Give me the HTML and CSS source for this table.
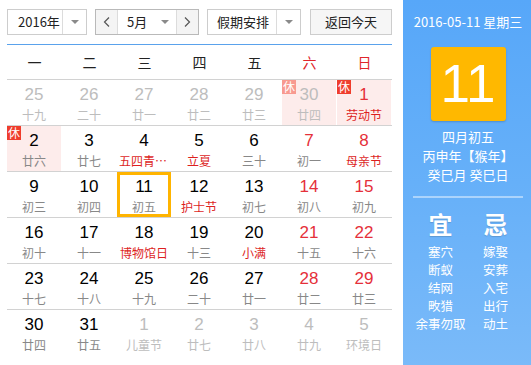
FILE: index.html
```html
<!DOCTYPE html>
<html lang="zh-CN">
<head>
<meta charset="utf-8">
<title>万年历</title>
<link rel="stylesheet" href="styles.css">
</head>
<body>
<div class="app">
  <div class="main">
    <div class="toolbar">
      <div class="select year">
        <span class="sel-text">2016年</span>
        <span class="sel-arrow"><i class="tri"></i></span>
      </div>
      <div class="month-group">
        <span class="nav prev"><svg width="7" height="10" viewBox="0 0 7 10"><polyline points="6,0.5 1.5,5 6,9.5" fill="none" stroke="#555" stroke-width="1.2"/></svg></span>
        <span class="month-text">5月<i class="tri"></i></span>
        <span class="nav next"><svg width="7" height="10" viewBox="0 0 7 10"><polyline points="1,0.5 5.5,5 1,9.5" fill="none" stroke="#555" stroke-width="1.2"/></svg></span>
      </div>
      <div class="select holiday">
        <span class="sel-text">假期安排</span>
        <span class="sel-arrow"><i class="tri"></i></span>
      </div>
      <button class="today-btn">返回今天</button>
    </div>

    <div class="calendar">
      <div class="week-head">
        <span>一</span><span>二</span><span>三</span><span>四</span><span>五</span><span class="we">六</span><span class="we">日</span>
      </div>

      <div class="week">
        <div class="day other"><span class="num">25</span><span class="lunar">十九</span></div>
        <div class="day other"><span class="num">26</span><span class="lunar">二十</span></div>
        <div class="day other"><span class="num">27</span><span class="lunar">廿一</span></div>
        <div class="day other"><span class="num">28</span><span class="lunar">廿二</span></div>
        <div class="day other"><span class="num">29</span><span class="lunar">廿三</span></div>
        <div class="day other rest"><span class="badge faded">休</span><span class="num">30</span><span class="lunar">廿四</span></div>
        <div class="day weekend rest"><span class="badge">休</span><span class="num">1</span><span class="lunar fest">劳动节</span></div>
      </div>

      <div class="week">
        <div class="day rest"><span class="badge">休</span><span class="num">2</span><span class="lunar">廿六</span></div>
        <div class="day"><span class="num">3</span><span class="lunar">廿七</span></div>
        <div class="day"><span class="num">4</span><span class="lunar fest">五四青年节</span></div>
        <div class="day"><span class="num">5</span><span class="lunar fest">立夏</span></div>
        <div class="day"><span class="num">6</span><span class="lunar">三十</span></div>
        <div class="day weekend"><span class="num">7</span><span class="lunar">初一</span></div>
        <div class="day weekend"><span class="num">8</span><span class="lunar fest">母亲节</span></div>
      </div>

      <div class="week">
        <div class="day"><span class="num">9</span><span class="lunar">初三</span></div>
        <div class="day"><span class="num">10</span><span class="lunar">初四</span></div>
        <div class="day today"><span class="num">11</span><span class="lunar">初五</span></div>
        <div class="day"><span class="num">12</span><span class="lunar fest">护士节</span></div>
        <div class="day"><span class="num">13</span><span class="lunar">初七</span></div>
        <div class="day weekend"><span class="num">14</span><span class="lunar">初八</span></div>
        <div class="day weekend"><span class="num">15</span><span class="lunar">初九</span></div>
      </div>

      <div class="week">
        <div class="day"><span class="num">16</span><span class="lunar">初十</span></div>
        <div class="day"><span class="num">17</span><span class="lunar">十一</span></div>
        <div class="day"><span class="num">18</span><span class="lunar fest">博物馆日</span></div>
        <div class="day"><span class="num">19</span><span class="lunar">十三</span></div>
        <div class="day"><span class="num">20</span><span class="lunar fest">小满</span></div>
        <div class="day weekend"><span class="num">21</span><span class="lunar">十五</span></div>
        <div class="day weekend"><span class="num">22</span><span class="lunar">十六</span></div>
      </div>

      <div class="week">
        <div class="day"><span class="num">23</span><span class="lunar">十七</span></div>
        <div class="day"><span class="num">24</span><span class="lunar">十八</span></div>
        <div class="day"><span class="num">25</span><span class="lunar">十九</span></div>
        <div class="day"><span class="num">26</span><span class="lunar">二十</span></div>
        <div class="day"><span class="num">27</span><span class="lunar">廿一</span></div>
        <div class="day weekend"><span class="num">28</span><span class="lunar">廿二</span></div>
        <div class="day weekend"><span class="num">29</span><span class="lunar">廿三</span></div>
      </div>

      <div class="week last">
        <div class="day"><span class="num">30</span><span class="lunar">廿四</span></div>
        <div class="day"><span class="num">31</span><span class="lunar">廿五</span></div>
        <div class="day other"><span class="num">1</span><span class="lunar">儿童节</span></div>
        <div class="day other"><span class="num">2</span><span class="lunar">廿七</span></div>
        <div class="day other"><span class="num">3</span><span class="lunar">廿八</span></div>
        <div class="day other"><span class="num">4</span><span class="lunar">廿九</span></div>
        <div class="day other"><span class="num">5</span><span class="lunar">环境日</span></div>
      </div>
    </div>
  </div>

  <aside class="panel">
    <div class="p-date">2016-05-11 星期三</div>
    <div class="p-big">11</div>
    <div class="p-lunar">
      <div>四月初五</div>
      <div>丙申年【猴年】</div>
      <div>癸巳月 癸巳日</div>
    </div>
    <div class="p-sep"></div>
    <div class="p-yiji">
      <div class="yj-col">
        <div class="yj-head">宜</div>
        <ul class="yj-list">
          <li>塞穴</li><li>断蚁</li><li>结网</li><li>畋猎</li><li>余事勿取</li>
        </ul>
      </div>
      <div class="yj-col">
        <div class="yj-head">忌</div>
        <ul class="yj-list">
          <li>嫁娶</li><li>安葬</li><li>入宅</li><li>出行</li><li>动土</li>
        </ul>
      </div>
    </div>
  </aside>
</div>
</body>
</html>
```

FILE: styles.css
```css
* { box-sizing: border-box; }

html, body {
  margin: 0;
  padding: 0;
  background: #fff;
}

body {
  font-family: "Liberation Sans", "Noto Sans CJK SC", sans-serif;
  color: #000;
}

.app {
  display: flex;
  width: 531px;
  height: 365px;
  overflow: hidden;
}

.main {
  width: 403px;
  flex: none;
  padding: 9px 11px 0 7px;
}

/* ---------- toolbar ---------- */
.toolbar {
  display: flex;
  height: 26px;
  gap: 8px;
  font-family: "Noto Sans CJK SC", "Liberation Sans", sans-serif;
  font-size: 13px;
  color: #222;
}

.select,
.month-group {
  display: flex;
  height: 26px;
  border: 1px solid #cdcdcd;
  background: #fff;
}

.sel-text {
  display: block;
  line-height: 24px;
  padding-left: 10px;
  border-right: 1px solid #dcdcdc;
  white-space: nowrap;
}

.year { width: 80px; }
.year .sel-text { width: 55px; }

.holiday { width: 94px; }
.holiday .sel-text { width: 69px; padding-left: 9px; }

.sel-arrow {
  flex: 1;
  display: flex;
  align-items: center;
  justify-content: center;
}

.tri {
  display: inline-block;
  width: 0;
  height: 0;
  border-left: 4px solid transparent;
  border-right: 4px solid transparent;
  border-top: 4px solid #8a8a8a;
}

.month-group {
  width: 104px;
  border-color: #b9b9b9;
}

.nav {
  display: flex;
  align-items: center;
  justify-content: center;
  background: #f4f4f4;
}
.prev { width: 22px; border-right: 1px solid #dcdcdc; }
.next { width: 22px; border-left: 1px solid #dcdcdc; }

.month-text {
  flex: 1;
  display: flex;
  align-items: center;
  padding-left: 9px;
  line-height: 24px;
}
.month-text .tri {
  margin-left: 14px;
}

.today-btn {
  margin-left: 1px;
  width: 82px;
  height: 26px;
  padding: 0;
  border: 1px solid #cdcdcd;
  background: #f6f6f6;
  font: inherit;
  color: #222;
  line-height: 24px;
}

/* ---------- calendar ---------- */
.calendar {
  margin-top: 9px;
  border-top: 1px solid #5aa2ec;
}

.week-head {
  display: grid;
  grid-template-columns: repeat(7, 55px);
  height: 35px;
  border-bottom: 1px solid #d2d2d2;
  font-family: "Noto Sans CJK SC", sans-serif;
  font-size: 14px;
  line-height: 34px;
  text-align: center;
  color: #222;
}
.week-head .we { color: #e0262b; }

.week {
  display: grid;
  grid-template-columns: repeat(7, 55px);
  height: 46px;
  border-bottom: 1px solid #d2d2d2;
}
.week.last { border-bottom: none; }

.day {
  position: relative;
  width: 54px;
  height: 45px;
  text-align: center;
}

.day.rest { background: #fdeceb; }
.day.today { box-shadow: inset 0 0 0 3px #ffb400; }

.num {
  display: block;
  padding-top: 5px;
  font-family: "Liberation Sans", sans-serif;
  font-size: 17px;
  line-height: 20px;
  color: #000;
}

.lunar {
  display: block;
  margin-top: 2px;
  padding: 0 2px;
  font-family: "Noto Sans CJK SC", sans-serif;
  font-size: 12px;
  line-height: 16px;
  color: #888;
  white-space: nowrap;
  overflow: hidden;
  text-overflow: ellipsis;
}

.weekend .num { color: #e5303a; }
.lunar.fest { color: #dd1f1f; }

.other .num,
.other .lunar { color: #bdbdbd; }

.badge {
  position: absolute;
  top: 0;
  left: 0;
  width: 14px;
  height: 14px;
  background: #ef3d2c;
  color: #fff;
  font-family: "Noto Sans CJK SC", sans-serif;
  font-size: 12px;
  line-height: 14px;
  text-align: center;
}
.badge.faded { background: #f89a90; }

/* ---------- side panel ---------- */
.panel {
  width: 128px;
  flex: none;
  height: 365px;
  padding-left: 2px;
  background: linear-gradient(to bottom, #57a7f9 0%, #66b0f9 50%, #7abaf9 100%);
  color: #fff;
  font-family: "Noto Sans CJK SC", "Liberation Sans", sans-serif;
  text-align: center;
}

.p-date {
  margin-top: 13px;
  font-size: 13px;
  line-height: 18px;
  white-space: nowrap;
}

.p-big {
  width: 75px;
  height: 74px;
  margin: 16px auto 0;
  background: #ffb800;
  border-radius: 3px;
  box-shadow: 0 1px 2px rgba(0, 0, 0, 0.18);
  font-family: "Liberation Sans", sans-serif;
  font-size: 53px;
  line-height: 74px;
  color: #fff;
}

.p-lunar {
  margin-top: 6px;
  font-size: 13px;
  line-height: 19px;
  white-space: nowrap;
}

.p-sep {
  width: 110px;
  height: 2px;
  margin: 12px auto 0;
  background: rgba(255, 255, 255, 0.45);
}

.p-yiji {
  display: grid;
  grid-template-columns: 55px 55px;
  justify-content: center;
  margin-top: 11px;
}

.yj-head {
  font-size: 24px;
  font-weight: bold;
  line-height: 30px;
  text-shadow: 0 1px 1px rgba(0, 0, 0, 0.15);
}

.yj-list {
  list-style: none;
  margin: 4px 0 0;
  padding: 0;
  font-size: 12.5px;
  line-height: 18px;
  white-space: nowrap;
}
```
